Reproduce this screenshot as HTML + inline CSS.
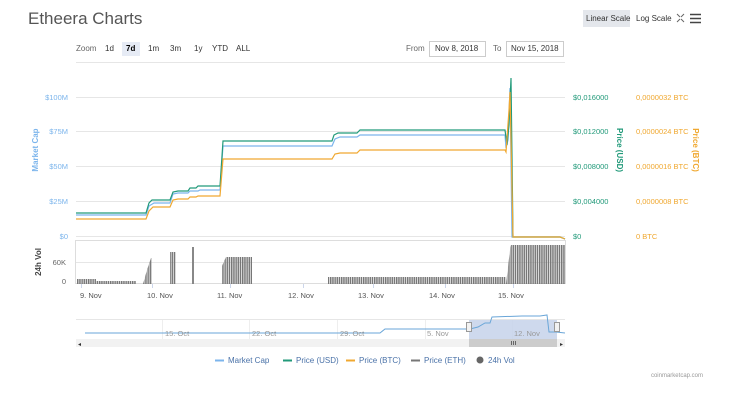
<!DOCTYPE html>
<html><head><meta charset="utf-8"><style>
body{margin:0;background:#fff;width:750px;height:401px;overflow:hidden;font-family:"Liberation Sans",sans-serif}
svg{display:block}
text{font-family:"Liberation Sans",sans-serif}
</style></head><body>
<svg width="750" height="401" viewBox="0 0 750 401" xmlns="http://www.w3.org/2000/svg">
<defs>
<pattern id="bars" width="2.2" height="10" patternUnits="userSpaceOnUse"><rect x="0" y="0" width="1.5" height="10" fill="#777"/></pattern>
</defs>
<text x="28" y="24" font-size="17" fill="#555">Etheera Charts</text>
<rect x="583" y="10" width="47" height="17" fill="#e4e7ec"/>
<text x="586" y="21" font-size="8" fill="#333">Linear Scale</text>
<text x="636" y="21" font-size="8" fill="#333">Log Scale</text>
<g stroke="#666" stroke-width="1" fill="none"><path d="M677 14l3 3M684 14l-3 3M677 22l3-3M684 22l-3-3"/></g>
<g stroke="#444" stroke-width="1.6"><path d="M690 14.5h11M690 18.5h11M690 22.5h11"/></g>

<text x="76" y="51" font-size="8" fill="#666">Zoom</text>
<text x="105" y="51" font-size="8" fill="#333">1d</text>
<rect x="122" y="42" width="18" height="14" fill="#e6ebf5"/>
<text x="126" y="51" font-size="8" fill="#000" font-weight="bold">7d</text>
<text x="148" y="51" font-size="8" fill="#333">1m</text>
<text x="170" y="51" font-size="8" fill="#333">3m</text>
<text x="194" y="51" font-size="8" fill="#333">1y</text>
<text x="212" y="51" font-size="8" fill="#333">YTD</text>
<text x="236" y="51" font-size="8" fill="#333">ALL</text>
<text x="406" y="51" font-size="8" fill="#666">From</text>
<rect x="429.5" y="41.5" width="56" height="15" fill="#fff" stroke="#ccc"/>
<text x="435" y="51" font-size="8" fill="#333">Nov 8, 2018</text>
<text x="493" y="51" font-size="8" fill="#666">To</text>
<rect x="506.5" y="41.5" width="57" height="15" fill="#fff" stroke="#ccc"/>
<text x="511" y="51" font-size="8" fill="#333">Nov 15, 2018</text>
<line x1="76" y1="62.5" x2="565" y2="62.5" stroke="#e6e6e6"/>

<g stroke="#e6e6e6" stroke-width="1">
<line x1="76" y1="97.5" x2="565" y2="97.5"/><line x1="76" y1="131.5" x2="565" y2="131.5"/>
<line x1="76" y1="166.5" x2="565" y2="166.5"/><line x1="76" y1="201.5" x2="565" y2="201.5"/>
<line x1="76" y1="236.5" x2="565" y2="236.5"/>
<line x1="76" y1="262.5" x2="565" y2="262.5"/>
<line x1="76" y1="283.5" x2="565" y2="283.5" stroke="#ccd6eb"/>
</g>
<rect x="75.5" y="240.5" width="490" height="43" fill="none" stroke="#ddd"/>
<g font-size="7.5" fill="#7cb5ec" text-anchor="end">
<text x="68" y="100">$100M</text><text x="68" y="134">$75M</text><text x="68" y="169">$50M</text><text x="68" y="204">$25M</text><text x="68" y="239">$0</text>
</g>
<text transform="translate(38,150) rotate(-90)" font-size="8" font-weight="bold" fill="#7cb5ec" text-anchor="middle">Market Cap</text>
<g font-size="7.5" fill="#229a7a">
<text x="573" y="100">$0,016000</text><text x="573" y="134">$0,012000</text><text x="573" y="169">$0,008000</text><text x="573" y="204">$0,004000</text><text x="573" y="239">$0</text>
</g>
<text transform="translate(617,150) rotate(90)" font-size="8" font-weight="bold" fill="#229a7a" text-anchor="middle">Price (USD)</text>
<g font-size="7.5" fill="#f0a830">
<text x="636" y="100">0,0000032 BTC</text><text x="636" y="134">0,0000024 BTC</text><text x="636" y="169">0,0000016 BTC</text><text x="636" y="204">0,0000008 BTC</text><text x="636" y="239">0 BTC</text>
</g>
<text transform="translate(693,150) rotate(90)" font-size="8" font-weight="bold" fill="#f0a830" text-anchor="middle">Price (BTC)</text>
<g font-size="7.5" fill="#666" text-anchor="end"><text x="66" y="265">60K</text><text x="66" y="284">0</text></g>
<text transform="translate(41,262) rotate(-90)" font-size="8" font-weight="bold" fill="#444" text-anchor="middle">24h Vol</text>

<!-- volume -->
<rect x="77" y="279" width="19" height="5" fill="url(#bars)"/>
<rect x="96" y="281" width="40" height="3" fill="url(#bars)"/>
<path d="M143 284L147 270L151 258L152 258L152 284Z" fill="url(#bars)"/>
<rect x="170" y="252" width="6" height="32" fill="url(#bars)"/>
<rect x="192" y="247" width="2" height="37" fill="#888"/>
<path d="M222 284L222 266L226 257L252 257L252 284Z" fill="url(#bars)"/>
<rect x="328" y="277" width="178" height="7" fill="url(#bars)"/>
<path d="M506 284L510 250L511 245L565 245L565 284Z" fill="url(#bars)"/>

<!-- lines -->
<polyline fill="none" stroke="#7cb5ec" stroke-width="1.2" points="76,215 146,215 149,206 154,203 170,203 173,194 178,193 188,193 190,191 198,191 200,190 220,190 223,146 332,146 335,139 340,137 357,137 360,135 505,135 506,148 508,140 510,88 512,237 560,237 565,239"/>
<polyline fill="none" stroke="#229a7a" stroke-width="1.2" points="76,213 146,213 149,203 152,200 170,200 173,192 178,191 188,191 190,188 196,188 198,186 220,186 223,141 332,141 334,135 338,133 357,133 360,130 505,130 507,145 509,125 511,78 513,237 560,237 565,239"/>
<polyline fill="none" stroke="#f0a830" stroke-width="1.2" points="76,219 146,219 149,211 153,207 170,207 173,200 178,199 188,199 190,197 196,197 198,196 220,196 223,159 332,159 335,154 340,153 357,153 360,150 505,150 506,152 509,110 510,92 513,237 560,237 565,239"/>

<g font-size="7.5" fill="#555">
<text x="80" y="298">9. Nov</text><text x="147" y="298">10. Nov</text><text x="217" y="298">11. Nov</text><text x="288" y="298">12. Nov</text><text x="358" y="298">13. Nov</text><text x="429" y="298">14. Nov</text><text x="498" y="298">15. Nov</text>
</g>
<g stroke="#ccd6eb"><line x1="81.5" y1="284" x2="81.5" y2="288"/><line x1="152.5" y1="284" x2="152.5" y2="288"/><line x1="230.5" y1="284" x2="230.5" y2="288"/><line x1="303.5" y1="284" x2="303.5" y2="288"/><line x1="373.5" y1="284" x2="373.5" y2="288"/><line x1="445.5" y1="284" x2="445.5" y2="288"/><line x1="513.5" y1="284" x2="513.5" y2="288"/></g>

<!-- navigator -->
<line x1="76" y1="319.5" x2="565" y2="319.5" stroke="#e6e6e6"/>
<g stroke="#eee"><line x1="162.5" y1="320" x2="162.5" y2="339"/><line x1="249.5" y1="320" x2="249.5" y2="339"/><line x1="337.5" y1="320" x2="337.5" y2="339"/><line x1="425.5" y1="320" x2="425.5" y2="339"/><line x1="512.5" y1="320" x2="512.5" y2="339"/></g>
<rect x="469" y="320" width="88" height="27" fill="#c6d2ea" opacity="0.85"/>
<polyline fill="none" stroke="#6aa6d8" stroke-width="1" points="85,333 200,333 380,333 385,329 470,329 478,327 485,323 490,323 492,317 522,316 540,316 547,315 549,332 556,332 565,333"/>
<g font-size="7.5" fill="#999"><text x="165" y="336">15. Oct</text><text x="252" y="336">22. Oct</text><text x="340" y="336">29. Oct</text><text x="427" y="336">5. Nov</text><text x="514" y="336">12. Nov</text></g>
<rect x="76" y="339" width="489" height="8" fill="#f2f2f2"/>
<rect x="469" y="339" width="88" height="8" fill="#cccccc"/>
<rect x="466.5" y="322.5" width="5" height="9" fill="#f2f2f2" stroke="#999"/>
<rect x="554.5" y="322.5" width="5" height="9" fill="#f2f2f2" stroke="#999"/>
<text x="78" y="346" font-size="6" fill="#333">◂</text><text x="560" y="346" font-size="6" fill="#333">▸</text>
<g stroke="#666"><line x1="511.5" y1="341" x2="511.5" y2="345"/><line x1="513.5" y1="341" x2="513.5" y2="345"/><line x1="515.5" y1="341" x2="515.5" y2="345"/></g>

<!-- legend -->
<g font-size="8" fill="#4a72a8">
<line x1="215" y1="360.5" x2="224" y2="360.5" stroke="#7cb5ec" stroke-width="2"/><text x="228" y="363">Market Cap</text>
<line x1="283" y1="360.5" x2="292" y2="360.5" stroke="#229a7a" stroke-width="2"/><text x="296" y="363">Price (USD)</text>
<line x1="346" y1="360.5" x2="355" y2="360.5" stroke="#f0a830" stroke-width="2"/><text x="359" y="363">Price (BTC)</text>
<line x1="411" y1="360.5" x2="420" y2="360.5" stroke="#777" stroke-width="2"/><text x="424" y="363">Price (ETH)</text>
<circle cx="480" cy="360" r="3.5" fill="#666"/><text x="488" y="363">24h Vol</text>
</g>
<text x="703" y="377" font-size="6" fill="#999" text-anchor="end">coinmarketcap.com</text>
</svg>
</body></html>
